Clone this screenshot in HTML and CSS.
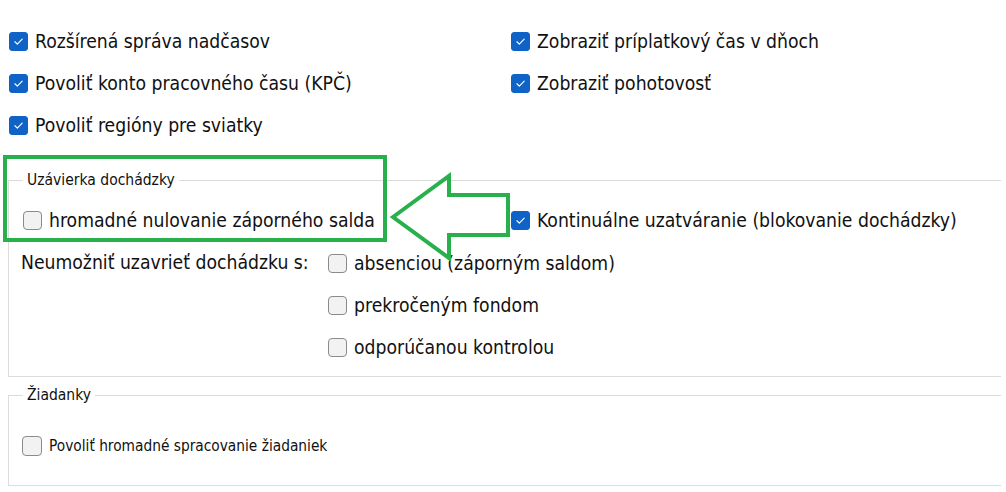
FILE: index.html
```html
<!DOCTYPE html>
<html lang="sk">
<head>
<meta charset="utf-8">
<title>Nastavenia</title>
<link rel="stylesheet" href="styles.css">
</head>
<body>
<div class="page">
  <div class="top">
    <label class="opt"><span class="cb on"><svg viewBox="0 0 19 19"><path d="M5.5 9.8 L8.2 12.4 L13.6 6.8"/></svg></span>Rozšírená správa nadčasov</label>
    <label class="opt"><span class="cb on"><svg viewBox="0 0 19 19"><path d="M5.5 9.8 L8.2 12.4 L13.6 6.8"/></svg></span>Zobraziť príplatkový čas v dňoch</label>
    <label class="opt"><span class="cb on"><svg viewBox="0 0 19 19"><path d="M5.5 9.8 L8.2 12.4 L13.6 6.8"/></svg></span>Povoliť konto pracovného času (KPČ)</label>
    <label class="opt"><span class="cb on"><svg viewBox="0 0 19 19"><path d="M5.5 9.8 L8.2 12.4 L13.6 6.8"/></svg></span>Zobraziť pohotovosť</label>
    <label class="opt"><span class="cb on"><svg viewBox="0 0 19 19"><path d="M5.5 9.8 L8.2 12.4 L13.6 6.8"/></svg></span>Povoliť regióny pre sviatky</label>
  </div>

  <fieldset class="group g1">
    <legend>Uzávierka dochádzky</legend>
    <div class="row1">
      <label class="opt"><span class="cb"></span>hromadné nulovanie záporného salda</label>
      <label class="opt"><span class="cb on"><svg viewBox="0 0 19 19"><path d="M5.5 9.8 L8.2 12.4 L13.6 6.8"/></svg></span>Kontinuálne uzatváranie (blokovanie dochádzky)</label>
    </div>
    <div class="row2">
      <div class="lead">Neumožniť uzavrieť dochádzku s:</div>
      <div class="list">
        <label class="opt"><span class="cb"></span>absenciou (záporným saldom)</label>
        <label class="opt"><span class="cb"></span>prekročeným fondom</label>
        <label class="opt"><span class="cb"></span>odporúčanou kontrolou</label>
      </div>
    </div>
  </fieldset>

  <fieldset class="group g2">
    <legend>Žiadanky</legend>
    <label class="opt small"><span class="cb"></span>Povoliť hromadné spracovanie žiadaniek</label>
  </fieldset>

  <div class="highlight"></div>
  <svg class="arrow" width="130" height="96" viewBox="388 170 130 96">
    <polygon points="393,217 449,176 449,195 508,195 508,235 449,235 449,258"/>
  </svg>
</div>
</body>
</html>
```
FILE: styles.css
```css
html, body {
  margin: 0;
  padding: 0;
  background: #ffffff;
}
body {
  font-family: "DejaVu Sans Condensed", "DejaVu Sans", sans-serif;
  color: #111111;
  width: 1006px;
  height: 492px;
  overflow: hidden;
}
.page {
  position: relative;
  width: 1006px;
  height: 492px;
}
.top {
  display: grid;
  grid-template-columns: 502px 1fr;
  row-gap: 10px;
  padding: 25px 0 0 9px;
}
.opt {
  display: flex;
  align-items: center;
  gap: 7px;
  height: 32px;
  font-size: 19.2px;
  white-space: nowrap;
}
.cb {
  flex: none;
  width: 17px;
  height: 17px;
  border: 1px solid #8a8a8a;
  border-radius: 4px;
  background: #f2f2f2;
  display: inline-flex;
  align-items: center;
  justify-content: center;
}
.cb.on {
  background: #0f62c6;
  border-color: #0f62c6;
  border-radius: 3px;
}
.cb svg {
  width: 19px;
  height: 19px;
}
.cb svg path {
  fill: none;
  stroke: #ffffff;
  stroke-width: 1.3;
  stroke-linecap: round;
  stroke-linejoin: round;
}
.group {
  margin: 0 0 0 8px;
  border: 1px solid #dcdcdc;
  border-right: none;
  width: 993px;
  box-sizing: border-box;
  padding: 0 0 0 12px;
}
.group legend {
  font-size: 15.5px;
  padding: 0 4px;
  margin-left: 2px;
  color: #111111;
}
.g1 {
  margin-top: 30px;
  height: 206px;
  padding-bottom: 0;
}
.row1 {
  display: grid;
  grid-template-columns: 488px 1fr;
  margin-top: 15px;
  padding-left: 2px;
}
.row2 {
  display: flex;
  margin-top: 11px;
}
.lead {
  width: 307px;
  font-size: 19.2px;
  height: 32px;
  line-height: 32px;
  white-space: nowrap;
}
.list {
  display: flex;
  flex-direction: column;
  row-gap: 10px;
}
.g2 {
  margin-top: 9px;
  height: 100px;
}
.opt.small {
  font-size: 15.3px;
  margin-top: 26px;
  padding-left: 1px;
  gap: 7px;
}
.opt.small .cb {
  width: 18px;
  height: 18px;
}
.highlight {
  position: absolute;
  left: 3px;
  top: 155px;
  width: 376px;
  height: 79px;
  border: 4px solid #27b04c;
}
.arrow {
  position: absolute;
  left: 388px;
  top: 170px;
  overflow: visible;
}
.arrow polygon {
  fill: none;
  stroke: #27b04c;
  stroke-width: 4;
  stroke-linejoin: miter;
}
```
